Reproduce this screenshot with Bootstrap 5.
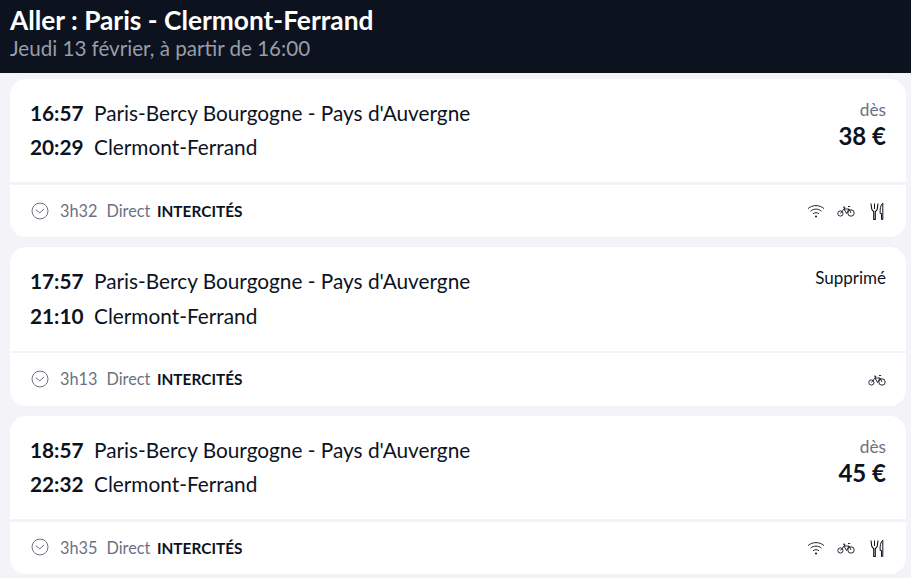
<!DOCTYPE html>
<html lang="fr"><head><meta charset="utf-8">
<link rel="stylesheet" href="https://cdn.jsdelivr.net/npm/bootstrap@5.3.0/dist/css/bootstrap.min.css">
<style>
html,body{height:578px;overflow:hidden}
body{background:#f3f3f8;font-family:Lato,"Liberation Sans",sans-serif;color:#0c131f}
.hd{background:#0c131f;height:73px;padding:4px 10px 0}
.hd-t{font-size:26.3px;font-weight:700;line-height:32px;color:#fff}
.hd-s{font-size:20.6px;line-height:25px;color:#9a9da5}
.trips{padding:6px 5px 0 10px;display:flex;flex-direction:column;gap:10px}
.trip{background:#fff;border-radius:16px;height:158.4px;overflow:hidden}
.top{height:103.4px;padding:17px 20px 0}
.sep{height:2.5px;background:#f3f3f8}
.line{font-size:20.8px;line-height:34.4px;white-space:nowrap}
.tm{font-weight:700;display:inline-block;width:64px}
.pr{text-align:right}
.des{font-size:17.3px;color:#6b7184;line-height:20px;margin-top:4px}
.amt{font-size:24px;font-weight:700;line-height:32px;margin-top:0}
.sup{font-size:17px;line-height:20px;margin-top:4px}
.bot{height:52.5px;padding:0 20px;font-size:16.3px;color:#6b7184}
.ck{margin:-1px 11px 0 1px}
.dir{margin-left:9px}
.op{font-weight:700;font-size:15.4px;color:#0c131f;margin-left:6.6px;margin-top:1px}
.ic-w{margin-right:12px}
.ic-b{margin-right:15px}
</style></head><body>
<svg width="0" height="0" class="d-block" aria-hidden="true">
<symbol id="i-clock" viewBox="0 0 18 18"><circle cx="9" cy="9" r="8" fill="none" stroke="#6b7184" stroke-width="1"/><path d="M4.800 7.800 8.800 10.800 13.200 6.800" fill="none" stroke="#6b7184" stroke-width="1"/></symbol>
<symbol id="i-wifi" viewBox="0 0 18 14"><g fill="none" stroke="#0c131f" stroke-width=".9"><path d="M1 4.600c4.600-4 11.400-4 16 0"/><path d="M3.500 7.200c3.200-2.800 7.800-2.800 11 0"/><path d="M6 9.800c1.800-1.500 4.200-1.500 6 0"/></g><circle cx="9" cy="12.400" r="1" fill="#0c131f"/></symbol>
<symbol id="i-bike" viewBox="0 0 18 12"><g fill="none" stroke="#0c131f" stroke-width=".9"><circle cx="3.400" cy="8.500" r="2.600"/><circle cx="14" cy="8" r="3.200"/><path d="M3.400 8.500 7 4h5L14 8M7 4 9.500 8.500 12 4M6 2.200h2L7 4M11 1.500h2.200"/></g></symbol>
<symbol id="i-fork" viewBox="0 0 16 18"><g fill="none" stroke="#0c131f"><path d="M1 1.500 1.700 6.800C2 8.300 2.800 9 3.700 9.400V17.500H5.300V9.400C6.200 9 7 8.300 7.300 6.800L8 1.500" stroke-width="1.100"/><path d="M4.500 1.500V7" stroke-width="1"/><path d="M11.500 17.500V11.500H10.200C9.800 7 10.500 3 12.800 1.200V17.500Z" stroke-width="1"/></g></symbol>
</svg>
<header class="hd"><div class="hd-t">Aller : Paris - Clermont-Ferrand</div><div class="hd-s">Jeudi 13 février, à partir de 16:00</div></header>
<main class="trips">
<article class="trip">
<div class="top d-flex justify-content-between"><div><div class="line"><span class="tm">16:57</span>Paris-Bercy Bourgogne - Pays d'Auvergne</div><div class="line"><span class="tm">20:29</span>Clermont-Ferrand</div></div><div class="pr"><div class="des">dès</div><div class="amt">38 €</div></div></div>
<div class="sep"></div>
<div class="bot d-flex align-items-center justify-content-between"><div class="d-flex align-items-center"><svg class="ck" width="18" height="18"><use href="#i-clock"/></svg><span>3h32</span><span class="dir">Direct</span><span class="op">INTERCITÉS</span></div><div class="d-flex align-items-center"><svg class="ic-w" width="18" height="14"><use href="#i-wifi"/></svg><svg class="ic-b" width="18" height="12"><use href="#i-bike"/></svg><svg width="16" height="18"><use href="#i-fork"/></svg></div></div>
</article>
<article class="trip">
<div class="top d-flex justify-content-between"><div><div class="line"><span class="tm">17:57</span>Paris-Bercy Bourgogne - Pays d'Auvergne</div><div class="line"><span class="tm">21:10</span>Clermont-Ferrand</div></div><div class="pr"><div class="sup">Supprimé</div></div></div>
<div class="sep"></div>
<div class="bot d-flex align-items-center justify-content-between"><div class="d-flex align-items-center"><svg class="ck" width="18" height="18"><use href="#i-clock"/></svg><span>3h13</span><span class="dir">Direct</span><span class="op">INTERCITÉS</span></div><div class="d-flex align-items-center"><svg width="18" height="12"><use href="#i-bike"/></svg></div></div>
</article>
<article class="trip">
<div class="top d-flex justify-content-between"><div><div class="line"><span class="tm">18:57</span>Paris-Bercy Bourgogne - Pays d'Auvergne</div><div class="line"><span class="tm">22:32</span>Clermont-Ferrand</div></div><div class="pr"><div class="des">dès</div><div class="amt">45 €</div></div></div>
<div class="sep"></div>
<div class="bot d-flex align-items-center justify-content-between"><div class="d-flex align-items-center"><svg class="ck" width="18" height="18"><use href="#i-clock"/></svg><span>3h35</span><span class="dir">Direct</span><span class="op">INTERCITÉS</span></div><div class="d-flex align-items-center"><svg class="ic-w" width="18" height="14"><use href="#i-wifi"/></svg><svg class="ic-b" width="18" height="12"><use href="#i-bike"/></svg><svg width="16" height="18"><use href="#i-fork"/></svg></div></div>
</article>
</main>
<script src="https://cdn.jsdelivr.net/npm/bootstrap@5.3.0/dist/js/bootstrap.bundle.min.js"></script>
</body></html>
